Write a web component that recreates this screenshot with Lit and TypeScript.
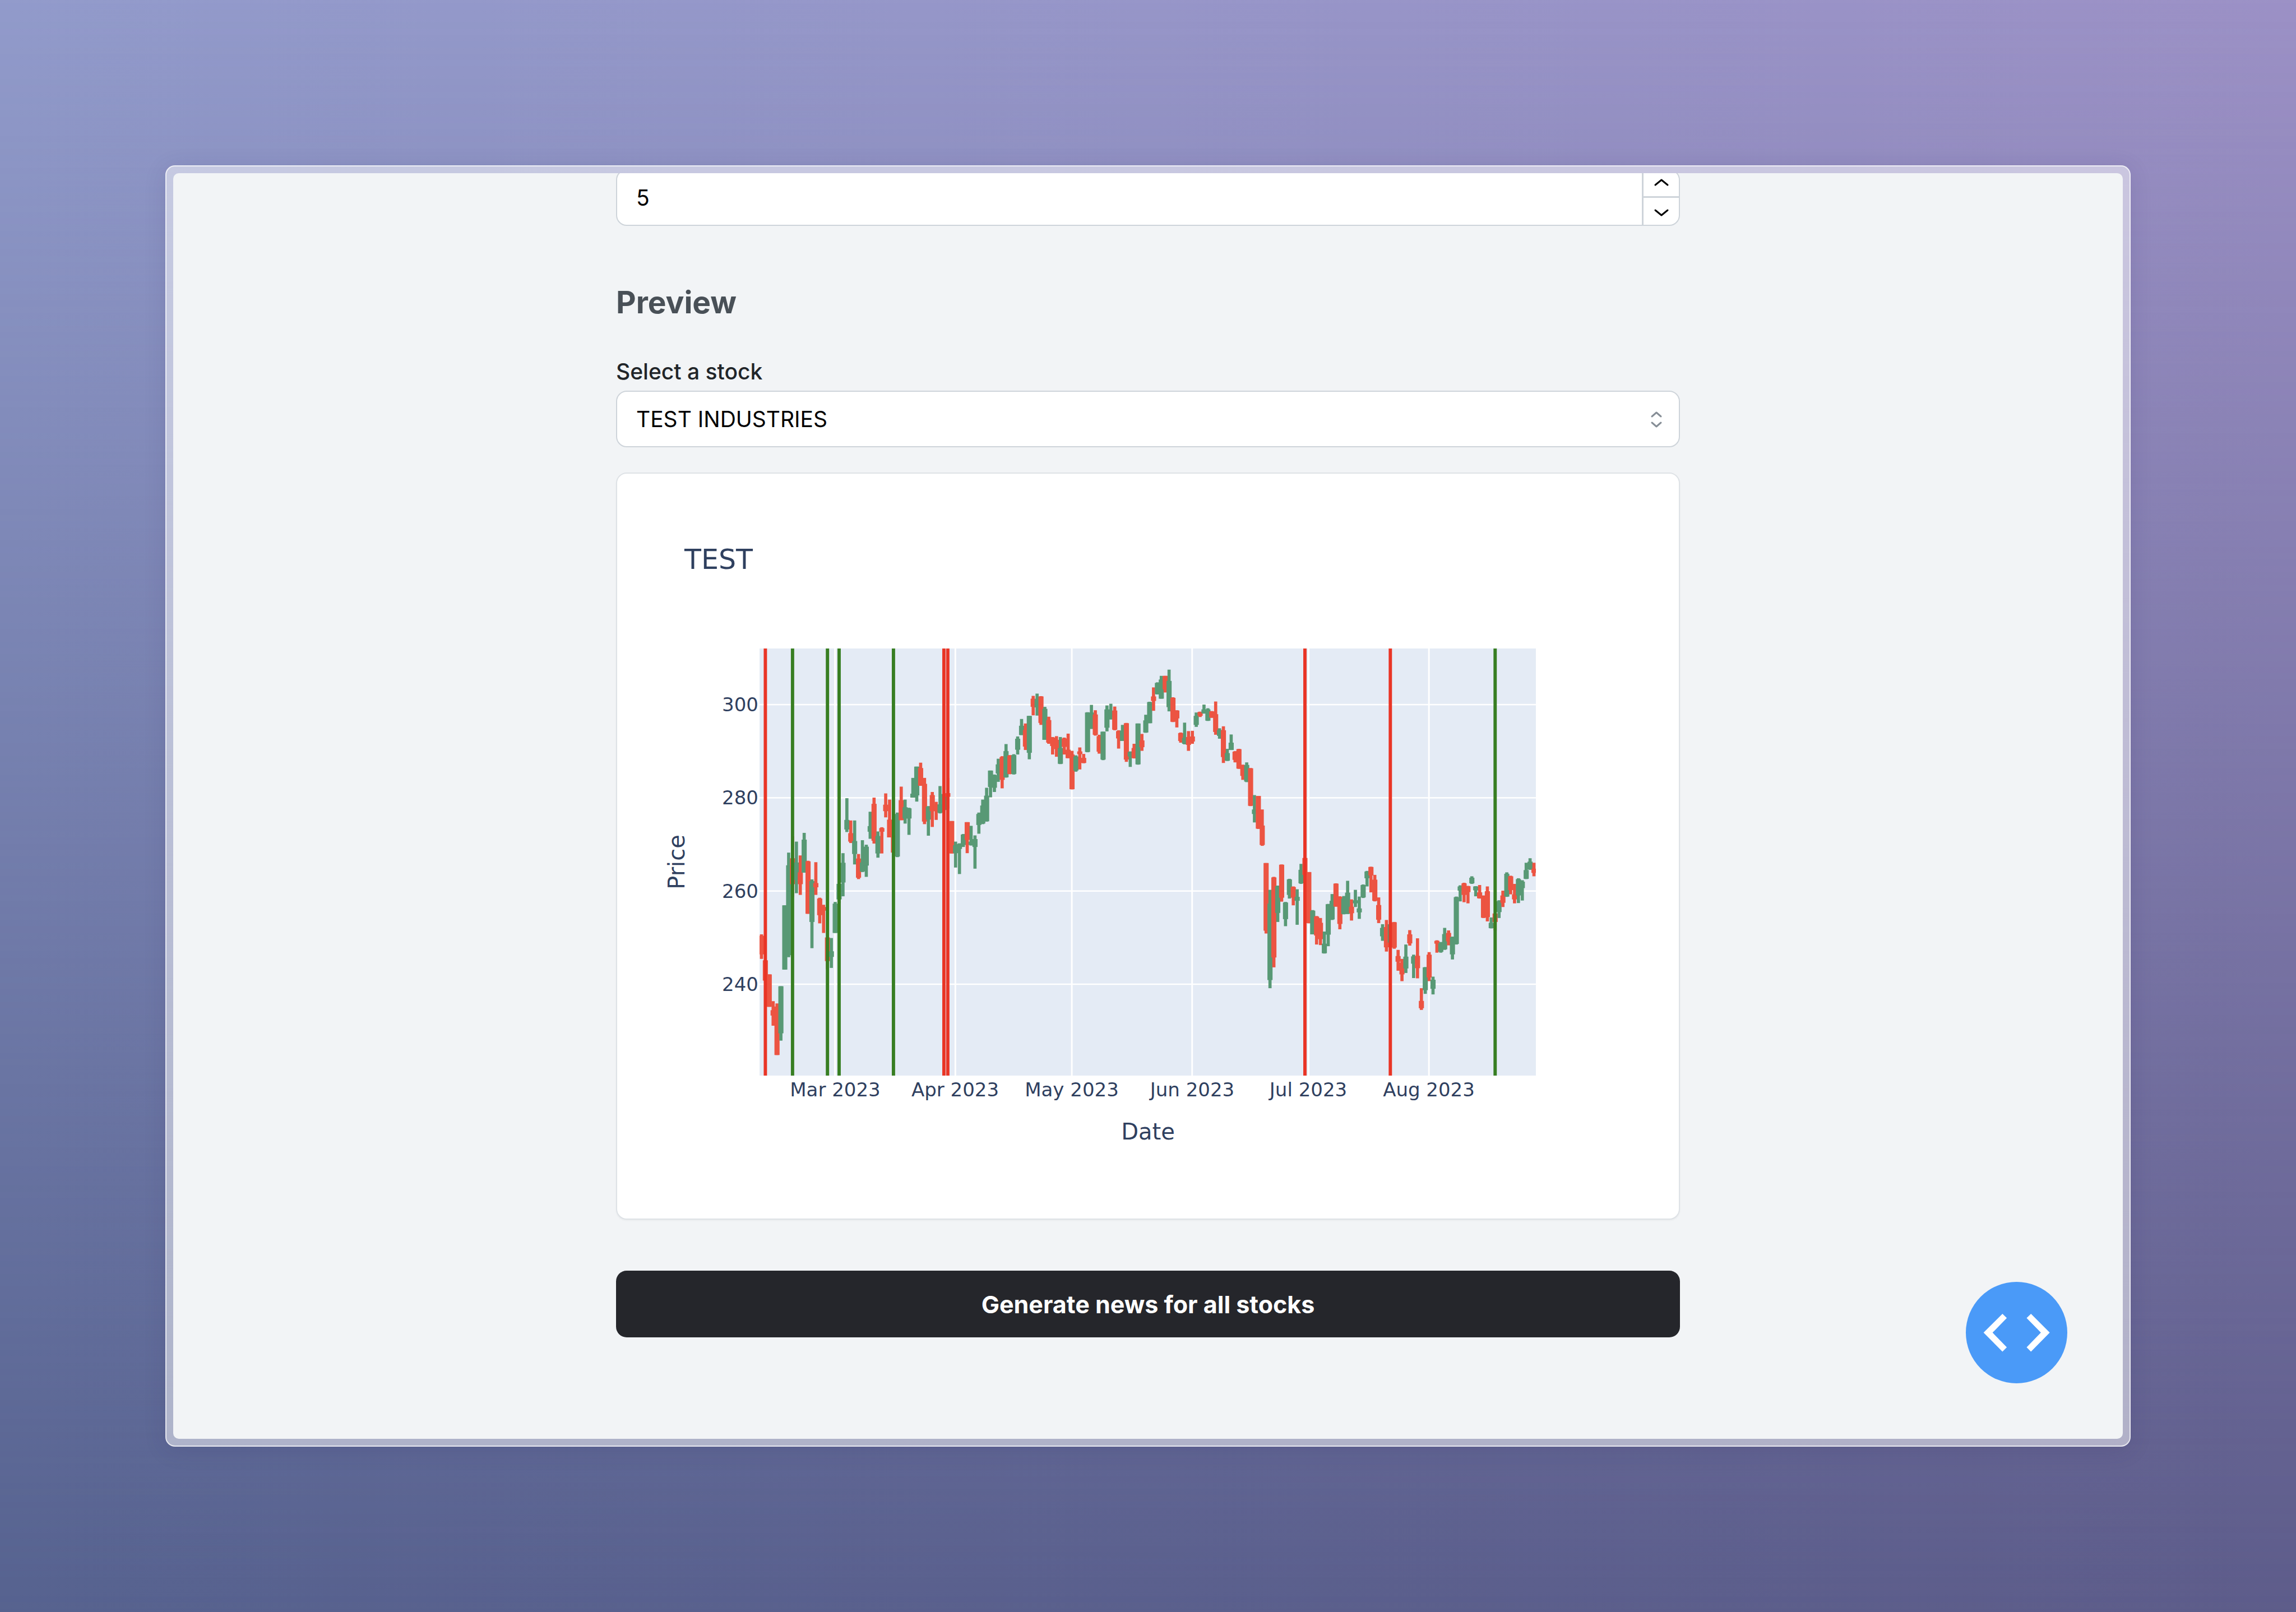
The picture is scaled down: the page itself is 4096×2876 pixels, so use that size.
import { LitElement, html, svg, css } from "lit";
import { customElement, state } from "lit/decorators.js";

type Direction = "up" | "down";

interface Candle {
  direction: Direction;
  high: number;
  top: number;
  bottom: number;
  low: number;
}

// One candle per trading day: direction (g = rising, r = falling), then
// high, body top, body bottom and low, measured downwards in plot units.
const SERIES = `
r 1041 1046 1112 1128|r 1133 1133 1205 1205|r 1183 1183 1298 1298|r 1278 1310 1329 1365|r 1286 1297 1469 1469
g 1225 1225 1392 1418|g 938 938 1166 1166|g 751 796 1115 1122|r 693 771 863 908|g 712 786 848 895
r 761 821 863 901|g 681 705 822 822|r 780 782 968 968|g 846 852 997 1090|r 785 859 874 901
r 911 914 973 1002|r 936 944 957 1036|r 1052 1052 1136 1164|g 1054 1101 1121 1160|g 926 932 1036 1036
g 805 862 917 930|g 753 787 857 906|g 558 635 669 678|r 637 682 712 717|g 637 710 756 793
r 756 772 840 845|g 707 786 818 820|g 723 730 797 837|g 606 657 677 702|r 556 578 709 719
g 676 692 754 769|r 661 664 677 754|r 541 581 604 626|r 563 634 697 697|r 690 690 751 751
g 609 614 765 767|r 517 565 636 636|g 563 590 630 648|g 592 594 630 688|g 486 542 556 556
g 446 446 548 570|r 432 451 514 514|r 486 507 641 650|g 586 588 634 691|r 536 547 604 660
r 571 580 604 635|g 515 580 610 612|g 543 543 600 600|r 486 540 553 595|r 639 639 754 754
g 712 725 753 804|g 718 720 738 827|g 685 687 724 731|r 643 643 706 753|g 656 712 724 726
g 690 703 731 808|g 609 614 653 684|g 563 584 648 650|g 521 549 640 641|g 460 460 518 555
g 474 476 521 536|g 418 438 470 500|r 409 412 493 523|g 366 391 484 485|r 405 407 472 473
g 402 405 472 474|g 339 347 386 403|g 277 301 334 334|r 293 316 375 387|g 266 266 397 420
r 195 205 234 264|g 187 207 236 265|r 196 197 291 298|g 234 241 351 351|r 269 281 361 365
r 341 343 373 403|r 338 351 384 411|g 341 380 436 437|r 343 346 376 403|r 329 386 416 416
r 390 403 526 527|g 406 410 460 464|r 378 392 402 456|r 401 415 433 434|g 253 254 394 395
g 227 254 312 312|r 246 261 333 336|r 333 338 393 400|g 322 322 421 423|g 229 243 308 321
g 223 248 270 279|r 233 247 315 317|r 317 320 346 382|g 298 318 355 355|r 291 292 421 429
g 392 394 410 447|r 365 380 416 417|g 293 293 438 439|r 330 353 377 390|g 262 282 325 326
g 216 217 292 292|r 165 197 213 248|g 147 149 189 190|g 124 137 205 205|r 124 124 172 183
g 102 142 235 250|r 200 202 287 288|r 246 247 275 307|r 325 327 355 361|g 290 344 365 367
r 320 341 369 390|r 319 339 357 365|g 254 266 298 305|r 251 252 266 270|g 226 243 257 258
g 239 243 283 284|r 249 250 272 273|r 215 260 323 333|g 310 316 337 347|r 303 317 412 433
g 383 398 425 426|g 332 361 387 387|r 391 393 422 431|r 383 384 453 454|r 439 441 479 493
g 431 440 499 501|r 451 452 585 586|g 547 598 614 644|r 550 550 666 667|r 598 655 724 727
r 788 788 1028 1038|g 883 932 1203 1232|r 837 839 1123 1158|g 868 870 965 997|r 793 794 911 925
g 926 928 987 1012|g 844 846 901 914|r 871 873 911 938|g 881 908 922 1007|g 791 812 860 862
r 770 770 830 830|r 820 820 1001 1002|g 955 957 1041 1041|r 976 978 1045 1077|r 983 1000 1058 1079
g 1031 1074 1108 1109|g 933 934 1042 1083|g 898 922 988 990|r 860 861 942 943|r 906 908 1004 1023
g 905 914 969 970|g 851 893 968 969|r 917 943 966 992|g 883 920 931 944|g 907 949 963 986
g 864 866 910 912|g 816 818 842 871|r 801 802 832 892|r 830 847 922 924|r 910 937 989 1001
g 1005 1018 1048 1064|r 990 1015 1087 1102|g 1005 1005 1070 1070|r 997 998 1088 1092|r 1096 1118 1138 1170
r 1128 1141 1183 1207|g 1077 1120 1162 1178|r 1026 1041 1073 1081|g 1113 1119 1145 1196|r 1055 1117 1161 1197
r 1232 1277 1303 1309|g 1157 1158 1239 1252|r 1104 1113 1194 1207|g 1191 1202 1234 1254|r 1062 1064 1074 1106
g 1068 1073 1103 1106|g 1018 1040 1094 1096|r 1027 1036 1066 1080|g 1049 1051 1112 1130|g 907 909 1075 1077
g 867 871 886 924|r 858 860 901 927|r 869 870 891 931|g 835 840 860 862|g 870 871 885 906
r 866 892 913 914|r 903 904 982 983|r 871 888 980 995|g 981 1000 1019 1020|r 967 967 997 1027
g 920 923 962 983|r 886 903 929 944|g 821 826 907 908|r 833 835 884 899|r 862 899 917 931
g 842 845 903 930|g 849 854 877 921|g 787 813 844 845|g 771 783 811 812|r 787 808 823 835`;

const candles: Candle[] = SERIES.trim()
  .split(/[|\n]/)
  .map((row) => {
    const [mark, ...values] = row.split(" ");
    const [high, top, bottom, low] = values.map(Number);
    return { direction: mark === "g" ? "up" : "down", high, top, bottom, low };
  });

const events: { day: number; tone: Direction }[] = [
  { day: 1, tone: "down" },
  { day: 8, tone: "up" },
  { day: 17, tone: "up" },
  { day: 20, tone: "up" },
  { day: 34, tone: "up" },
  { day: 47, tone: "down" },
  { day: 48, tone: "down" },
  { day: 140, tone: "down" },
  { day: 162, tone: "down" },
  { day: 189, tone: "up" },
];

const months = [
  { day: 19, label: "Mar 2023" },
  { day: 50, label: "Apr 2023" },
  { day: 80, label: "May 2023" },
  { day: 111, label: "Jun 2023" },
  { day: 141, label: "Jul 2023" },
  { day: 172, label: "Aug 2023" },
];

const prices = [300, 280, 260, 240];

// Plot rectangle inside the figure.
const PLOT = { x: 254, y: 312, width: 1385, height: 762 };
// Plot units: horizontal and vertical extent of the series above.
const UNITS = { top: 27, width: 5160, height: 1515 };
const DAY = UNITS.width / candles.length;
const BODY = 34;
const WICK = 21;

const dayX = (day: number) => (day + 0.5) * DAY;
const monthX = (day: number) => dayX(day) - 2;
const priceY = (price: number) => 226 + (300 - price) * 16.53;
const toFigureX = (x: number) => PLOT.x + (x / UNITS.width) * PLOT.width;
const toFigureY = (y: number) =>
  PLOT.y + ((y - UNITS.top) / UNITS.height) * PLOT.height;

@customElement("candle-chart")
export class CandleChart extends LitElement {
  static styles = css`
    :host {
      display: block;
    }
    .figure {
      display: block;
      width: 100%;
      height: auto;
      font-family: "DejaVu Sans", Verdana, sans-serif;
      fill: #2f405f;
    }
    .title {
      font-size: 49px;
    }
    .axis {
      font-size: 40px;
    }
    .tick {
      font-size: 34px;
    }
    .middle {
      text-anchor: middle;
    }
    .end {
      text-anchor: end;
    }
    .area {
      fill: #e4ebf5;
    }
    .grid {
      fill: #ffffff;
    }
    .candle-up {
      fill: #589975;
    }
    .candle-down {
      fill: #ec5442;
    }
    .event-up {
      fill: #377e22;
    }
    .event-down {
      fill: #e93526;
    }
  `;

  render() {
    return html`
      <svg
        class="figure"
        viewBox="0 0 1894 1329"
        role="img"
        aria-label="TEST price by date"
      >
        <text class="title" x="120" y="170">TEST</text>
        <svg
          x=${PLOT.x}
          y=${PLOT.y}
          width=${PLOT.width}
          height=${PLOT.height}
          viewBox="0 ${UNITS.top} ${UNITS.width} ${UNITS.height}"
          preserveAspectRatio="none"
        >
          <rect
            class="area"
            x="0"
            y=${UNITS.top}
            width=${UNITS.width}
            height=${UNITS.height}
          ></rect>
          ${months.map(
            (m) => svg`<rect class="grid" x=${monthX(m.day) - 5}
              y=${UNITS.top} width="11" height=${UNITS.height}></rect>`
          )}
          ${prices.map(
            (p) => svg`<rect class="grid" x="0" y=${priceY(p) - 2.5}
              width=${UNITS.width} height="5"></rect>`
          )}
          ${candles.map((c, i) => {
            const x = dayX(i);
            return svg`<g class="candle-${c.direction}">
              <rect x=${x - WICK / 2} y=${c.high} width=${WICK}
                height=${c.low - c.high}></rect>
              <rect x=${x - BODY / 2} y=${c.top} width=${BODY}
                height=${c.bottom - c.top}></rect>
            </g>`;
          })}
          ${events.map(
            (e) => svg`<rect class="event-${e.tone}" x=${dayX(e.day) - 11}
              y=${UNITS.top} width="22" height=${UNITS.height}></rect>`
          )}
        </svg>
        ${prices.map(
          (p) => svg`<text class="tick end" x="252"
            y=${Math.round(toFigureY(priceY(p)) + 12)}>${p}</text>`
        )}
        ${months.map(
          (m) => svg`<text class="tick middle"
            x=${Math.round(toFigureX(monthX(m.day)))} y="1111">${m.label}</text>`
        )}
        <text class="axis middle" x="947" y="1188">Date</text>
        <text
          class="axis middle"
          transform="translate(120 693) rotate(-90)"
        >
          Price
        </text>
      </svg>
    `;
  }
}

@customElement("app-root")
export class AppRoot extends LitElement {
  static styles = css`
    :host {
      display: block;
      font-family: Inter, "Liberation Sans", sans-serif;
      font-size: 39px;
      color: #000000;
    }
    * {
      box-sizing: border-box;
    }
    .backdrop {
      position: relative;
      z-index: 0;
      display: flex;
      min-height: 100vh;
      padding: 295px;
      background: linear-gradient(to right, #929bcb, #9c91c6);
    }
    .backdrop::before {
      content: "";
      position: absolute;
      inset: 0;
      z-index: -1;
      background: linear-gradient(to right, #56628f, #5d5c8a);
      mask-image: linear-gradient(to bottom, transparent, #000000);
    }
    .frame {
      display: flex;
      flex: 1;
      padding: 12px;
      border: 2px solid rgba(255, 255, 255, 0.7);
      border-radius: 17px;
      background: rgba(255, 255, 255, 0.5);
      background-clip: border-box;
      box-shadow: 0 6px 40px rgba(40, 30, 90, 0.12);
    }
    .viewport {
      position: relative;
      flex: 1;
      display: flex;
      justify-content: center;
      overflow: hidden;
      border-radius: 10px;
      background: #f2f4f6;
    }
    .form {
      flex: 1;
      max-width: 1898px;
      display: flex;
      flex-direction: column;
      margin-top: -7px;
    }
    .field {
      display: grid;
      height: 101px;
      border: 2px solid #ced4da;
      border-radius: 19px;
      background: #ffffff;
      overflow: hidden;
    }
    .number {
      grid-template-columns: 1fr 66px;
    }
    .input,
    .select {
      width: 100%;
      min-width: 0;
      height: 100%;
      margin: 0;
      padding: 0 34px;
      border: 0;
      outline: 0;
      background: transparent;
      color: inherit;
      font: inherit;
      appearance: none;
    }
    .input {
      appearance: textfield;
    }
    .input::-webkit-inner-spin-button {
      display: none;
    }
    .stepper {
      display: grid;
      grid-template-rows: 46px 1fr;
      border-left: 3px solid #ced4da;
    }
    .step {
      display: grid;
      place-items: center;
      margin: 0;
      padding: 0 0 4px;
      border: 0;
      background: none;
      color: #000000;
    }
    .step + .step {
      padding: 4px 0 0;
      border-top: 3px solid #ced4da;
    }
    .chevron {
      display: block;
      width: 28px;
      height: 16px;
      fill: none;
      stroke: currentColor;
      stroke-width: 3;
      stroke-linecap: round;
      stroke-linejoin: round;
    }
    .picker > * {
      grid-area: 1 / 1;
    }
    .sorter {
      place-self: center end;
      width: 24px;
      height: 34px;
      margin-right: 28px;
      fill: none;
      stroke: #868e96;
      stroke-width: 3;
      stroke-linecap: round;
      stroke-linejoin: round;
      pointer-events: none;
    }
    .heading {
      margin: 98px 0 56px;
      font-size: 55px;
      line-height: 76px;
      font-weight: 700;
      color: #495057;
    }
    .label {
      margin-bottom: 4px;
      line-height: 60px;
      font-weight: 500;
      color: #212529;
    }
    .card {
      margin-top: 45px;
      border: 2px solid #dee2e6;
      border-radius: 19px;
      background: #ffffff;
      box-shadow: 0 2px 3px rgba(0, 0, 0, 0.04);
      overflow: hidden;
    }
    .submit {
      height: 119px;
      margin: 91px 0;
      padding: 0 48px;
      border: 0;
      border-radius: 19px;
      background: #25262b;
      color: #ffffff;
      font: inherit;
      font-size: 43px;
      font-weight: 700;
    }
    .fab {
      position: absolute;
      right: 99px;
      bottom: 99px;
      width: 181px;
      height: 181px;
      padding: 0;
      border: 0;
      border-radius: 50%;
      background: #4a9af8;
    }
    .code {
      display: block;
      width: 100%;
      height: 100%;
      fill: #ffffff;
    }
  `;

  @state() private count = 5;

  private setCount(event: Event) {
    this.count = Number((event.target as HTMLInputElement).value);
  }

  render() {
    return html`
      <div class="backdrop">
        <div class="frame">
          <main class="viewport">
            <form class="form" @submit=${(e: Event) => e.preventDefault()}>
              <div class="field number">
                <input
                  class="input"
                  type="number"
                  aria-label="Number of news"
                  .value=${String(this.count)}
                  @change=${this.setCount}
                />
                <div class="stepper">
                  <button
                    class="step"
                    type="button"
                    aria-label="Increase"
                    @click=${() => this.count++}
                  >
                    <svg class="chevron" viewBox="0 0 28 16">
                      <path d="M3 13 14 4 25 13"></path>
                    </svg>
                  </button>
                  <button
                    class="step"
                    type="button"
                    aria-label="Decrease"
                    @click=${() => this.count--}
                  >
                    <svg class="chevron" viewBox="0 0 28 16">
                      <path d="M3 4 14 13 25 4"></path>
                    </svg>
                  </button>
                </div>
              </div>

              <h2 class="heading">Preview</h2>

              <label class="label" for="stock">Select a stock</label>
              <div class="field picker">
                <select class="select" id="stock">
                  <option>TEST INDUSTRIES</option>
                </select>
                <svg class="sorter" viewBox="0 0 24 34">
                  <path d="M4 12 12 5 20 12M4 23 12 30 20 23"></path>
                </svg>
              </div>

              <section class="card"><candle-chart></candle-chart></section>

              <button class="submit" type="submit">
                Generate news for all stocks
              </button>
            </form>
            <button class="fab" type="button" aria-label="Developer tools">
              <svg class="code" viewBox="0 0 676 676">
                <path
                  d="M118 338 244 213 273 241 178 338 273 436 244 465ZM559 338 434 213 405 241 500 338 405 436 434 465Z"
                ></path>
              </svg>
            </button>
          </main>
        </div>
      </div>
    `;
  }
}
